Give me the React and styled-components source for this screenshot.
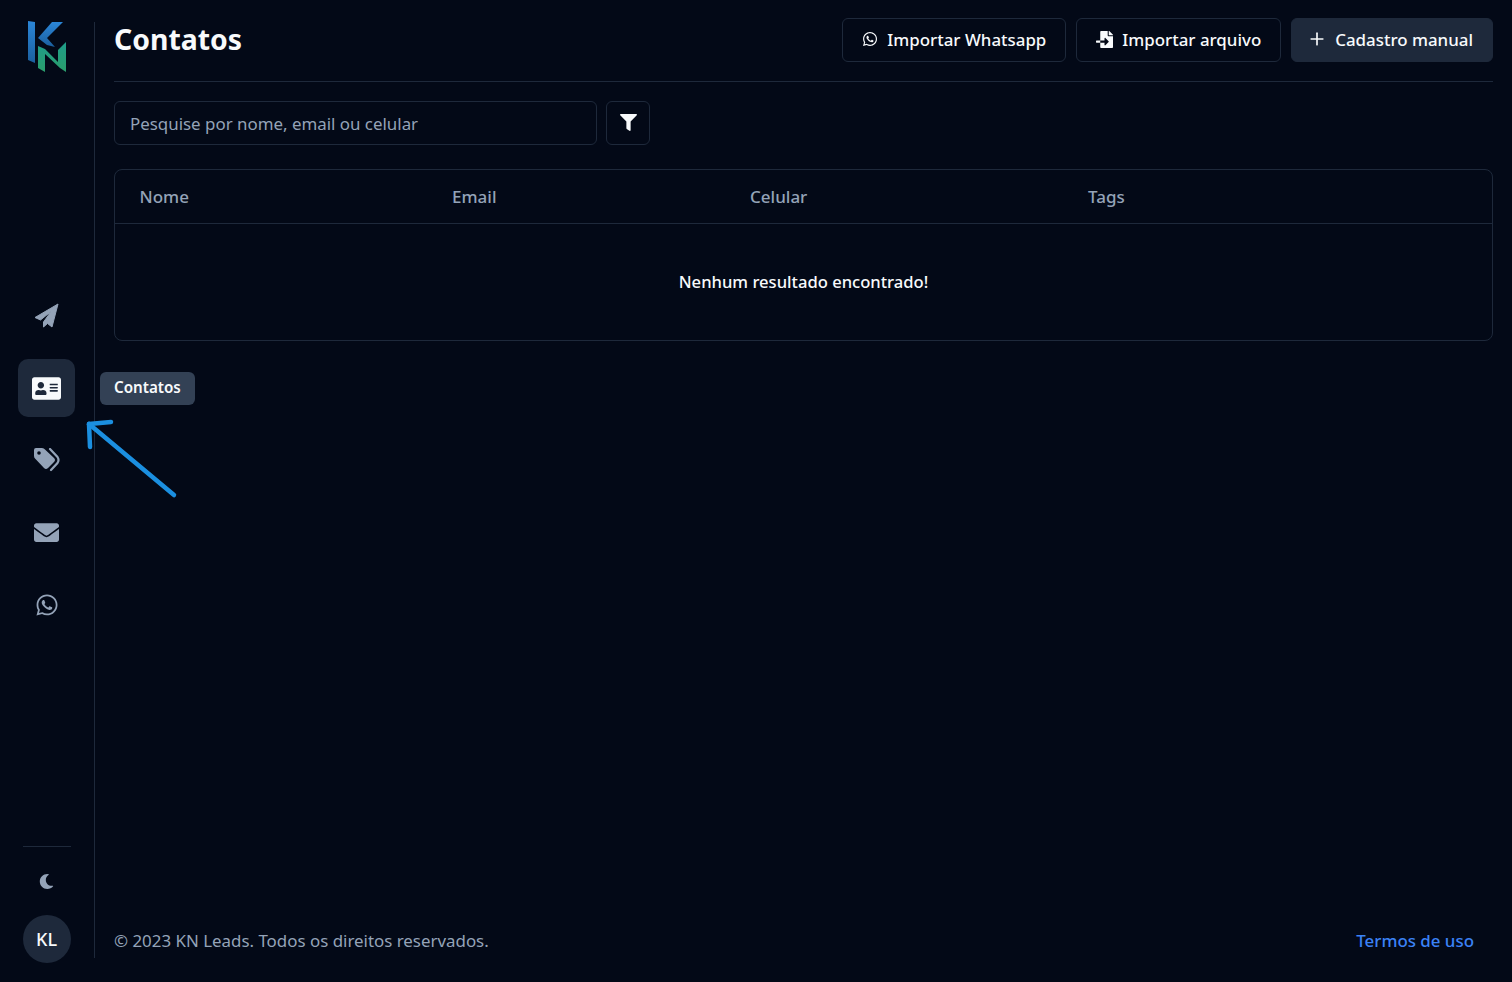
import React from 'react'
import styled, { createGlobalStyle } from 'styled-components'
import { FaAddressCard, FaEnvelope, FaWhatsapp, FaMoon, FaFilter, FaFileImport } from 'react-icons/fa'
import { Plus } from 'lucide-react'

const GlobalStyle = createGlobalStyle`
  html, body { margin: 0; padding: 0; background: #030917; }
  body { font-family: "Noto Sans", "Open Sans", sans-serif; color: #f8fafc; }
  * { box-sizing: border-box; }
`

const Page = styled.div`
  position: relative;
  width: 1512px;
  height: 982px;
  overflow: hidden;
  display: flex;
  background: #030917;
  padding: 22px 19px 24px 0;
`

const Sidebar = styled.aside`
  position: relative;
  width: 95px;
  flex-shrink: 0;
  border-right: 1px solid #1e293b;
  display: flex;
  flex-direction: column;
  align-items: center;
  padding-right: 1px;
`

const Logo = styled.svg`
  width: 38px;
  height: 52px;
  margin-left: 1px;
  margin-top: -1px;
`

const Nav = styled.nav`
  margin-top: 214px;
  display: flex;
  flex-direction: column;
  gap: 14.8px;
`

const NavItem = styled.div`
  width: 57.5px;
  height: 57.5px;
  border-radius: 10px;
  display: flex;
  align-items: center;
  justify-content: center;
  background: ${p => (p.$active ? '#1e293b' : 'transparent')};
  color: ${p => (p.$active ? '#f8fafc' : '#94a3b8')};
  font-size: ${p => p.$size || 26}px;
`

const NavGlyph = styled.svg`
  width: ${p => p.$w}px;
  height: ${p => p.$h}px;
  display: block;
`

const SideBottom = styled.div`
  margin-top: auto;
  display: flex;
  flex-direction: column;
  align-items: center;
  width: 48px;
  margin-bottom: -5px;
  border-top: 1px solid #1e293b;
`

const ThemeToggle = styled.div`
  height: 68px;
  display: flex;
  align-items: center;
  justify-content: center;
  color: #94a3b8;
  font-size: 15px;
`

const Avatar = styled.div`
  width: 48px;
  height: 48px;
  border-radius: 50%;
  background: #1e293b;
  display: flex;
  align-items: center;
  justify-content: center;
  font-size: 18px;
  font-weight: 500;
  color: #f8fafc;
  padding-bottom: 1px;
`

const Tooltip = styled.div`
  position: absolute;
  left: 100px;
  top: 350px;
  height: 33px;
  padding: 0 14px 3px;
  border-radius: 6px;
  background: #334155;
  display: flex;
  align-items: center;
  font-size: 15.2px;
  font-weight: 600;
  color: #f8fafc;
  white-space: nowrap;
`

const Arrow = styled.svg`
  position: absolute;
  left: 80px;
  top: 415px;
  width: 100px;
  height: 90px;
  pointer-events: none;
`

const Main = styled.main`
  flex: 1;
  display: flex;
  flex-direction: column;
  padding-left: 19px;
  margin-top: -4px;
`

const Header = styled.header`
  display: flex;
  align-items: flex-start;
  justify-content: space-between;
  height: 64px;
  border-bottom: 1px solid #1e293b;
`

const Title = styled.h1`
  margin: 0;
  font-size: 28.4px;
  line-height: 43px;
  font-weight: 700;
  color: #f8fafc;
`

const Actions = styled.div`
  display: flex;
  gap: 10px;
`

const Button = styled.button`
  height: 44px;
  padding: 0 19px 2px;
  border-radius: 6px;
  border: 1px solid #1e293b;
  background: transparent;
  color: #f8fafc;
  display: flex;
  align-items: center;
  gap: 9px;
  font-family: inherit;
  font-size: 16.9px;
  font-weight: 500;
  white-space: nowrap;
`

const SolidButton = styled(Button)`
  padding: 0 19px 2px 15px;
  gap: 8px;
  background: #1e293b;
`

const SearchRow = styled.div`
  display: flex;
  gap: 9px;
  margin-top: 19px;
`

const SearchInput = styled.input`
  width: 483px;
  height: 44px;
  padding: 0 15px;
  border-radius: 6px;
  border: 1px solid #1e293b;
  background: transparent;
  color: #f8fafc;
  font-family: inherit;
  font-size: 16.9px;
  &::placeholder { color: #94a3b8; opacity: 1; }
`

const IconButton = styled.button`
  width: 44px;
  height: 44px;
  border-radius: 6px;
  border: 1px solid #1e293b;
  background: transparent;
  color: #f8fafc;
  font-size: 17px;
  display: flex;
  align-items: center;
  justify-content: center;
  padding: 0 0 2px;
`

const Table = styled.div`
  margin-top: 24px;
  height: 172px;
  border: 1px solid #1e293b;
  border-radius: 8px;
  display: flex;
  flex-direction: column;
`

const TableHead = styled.div`
  display: grid;
  grid-template-columns: 312.5px 298px 338px 1fr;
  height: 54px;
  align-items: center;
  padding: 0 24.5px;
  border-bottom: 1px solid #1e293b;
  color: #94a3b8;
  font-size: 17px;
  font-weight: 500;
`

const Empty = styled.div`
  flex: 1;
  display: flex;
  align-items: center;
  justify-content: center;
  font-size: 16.6px;
  font-weight: 500;
  color: #f8fafc;
  padding-bottom: 1px;
`

const Footer = styled.footer`
  margin-top: auto;
  display: flex;
  justify-content: space-between;
  align-items: center;
  padding-right: 19px;
  margin-bottom: 5px;
  font-size: 16.9px;
  line-height: 24px;
  color: #94a3b8;
`

const TermsLink = styled.a`
  color: #3b82f6;
  font-weight: 500;
  text-decoration: none;
`

export default function App() {
  return (
    <Page>
      <GlobalStyle />
      <Sidebar>
        <Logo viewBox="0 0 38 52">
          <defs>
            <linearGradient id="kBlue" x1="0" y1="0" x2="0" y2="1">
              <stop offset="0" stopColor="#2b86d8" />
              <stop offset="1" stopColor="#1b5f9e" />
            </linearGradient>
            <linearGradient id="nGreen" x1="0" y1="0" x2="0" y2="1">
              <stop offset="0" stopColor="#1f9d8a" />
              <stop offset="1" stopColor="#2a9d6b" />
            </linearGradient>
          </defs>
          <polygon points="0,0 7,1 7,42 0,39" fill="url(#kBlue)" />
          <polygon points="24,1 35,1 19,17 27,26 19,24 10,17" fill="url(#kBlue)" />
          <polygon points="10,25 17,28 30,41 30,29 38,21 38,51 32,47 17,33 17,51 10,47" fill="url(#nGreen)" />
        </Logo>
        <Nav>
          <NavItem>
            <NavGlyph $w={25} $h={25} viewBox="0 0 25 25">
              <path fill="currentColor" stroke="currentColor" strokeWidth="1" strokeLinejoin="round" d="M24 1 L1 14.5 L6.5 17 L17 8.5 L9.5 19 L9.5 24 L13.5 20.5 L18 24 Z" />
            </NavGlyph>
          </NavItem>
          <NavItem $active $size={29}><FaAddressCard /></NavItem>
          <NavItem>
            <NavGlyph $w={26} $h={24} viewBox="0 0 26 24">
              <path fill="currentColor" d="M2 0 H8 Q10 0 11 1.5 L20 10 Q22 12 20 14 L14 20 Q12 22 10 20 L1.5 11 Q0 10 0 8 V2 Q0 0 2 0 Z" />
              <circle cx="5" cy="5" r="1.8" fill="#030917" />
              <path fill="none" stroke="currentColor" strokeWidth="2.2" strokeLinecap="round" d="M16 1 L23.5 9 Q25.5 12 23.5 15 L17 22" />
            </NavGlyph>
          </NavItem>
          <NavItem $size={25}><FaEnvelope /></NavItem>
          <NavItem $size={24}><FaWhatsapp /></NavItem>
        </Nav>
        <SideBottom>
          <ThemeToggle><FaMoon /></ThemeToggle>
          <Avatar>KL</Avatar>
        </SideBottom>
        <Tooltip>Contatos</Tooltip>
      </Sidebar>
      <Main>
        <Header>
          <Title>Contatos</Title>
          <Actions>
            <Button><FaWhatsapp size={16} />Importar Whatsapp</Button>
            <Button><FaFileImport size={17} />Importar arquivo</Button>
            <SolidButton><Plus size={20} />Cadastro manual</SolidButton>
          </Actions>
        </Header>
        <SearchRow>
          <SearchInput placeholder="Pesquise por nome, email ou celular" />
          <IconButton><FaFilter /></IconButton>
        </SearchRow>
        <Table>
          <TableHead>
            <span>Nome</span>
            <span>Email</span>
            <span>Celular</span>
            <span>Tags</span>
          </TableHead>
          <Empty>Nenhum resultado encontrado!</Empty>
        </Table>
        <Footer>
          <span>© 2023 KN Leads. Todos os direitos reservados.</span>
          <TermsLink href="#">Termos de uso</TermsLink>
        </Footer>
      </Main>
      <Arrow viewBox="0 0 100 90">
        <g fill="none" stroke="#1b8fe0" strokeWidth="4.5" strokeLinecap="round">
          <line x1="94" y1="80" x2="9" y2="9" />
          <line x1="9" y1="9" x2="31" y2="7" />
          <line x1="9" y1="9" x2="10" y2="32" />
        </g>
      </Arrow>
    </Page>
  )
}
